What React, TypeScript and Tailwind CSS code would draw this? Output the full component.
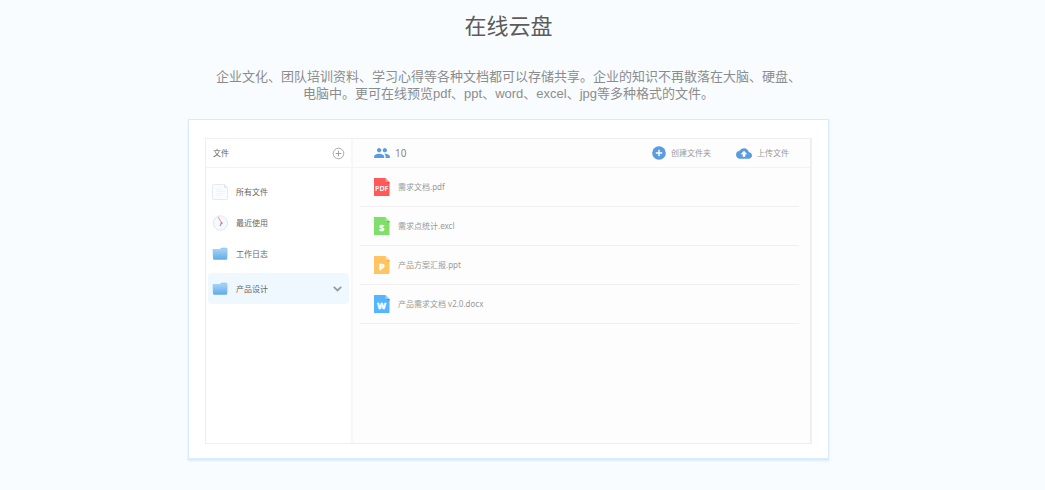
import type { ReactNode } from "react";

const folders = [
  { name: "所有文件", icon: <PageIcon /> },
  { name: "最近使用", icon: <ClockIcon /> },
  { name: "工作日志", icon: <FolderIcon /> },
];

const files = [
  { name: "需求文档.pdf", label: "PDF", fill: "#ff5a5a", fold: "#d93f42" },
  { name: "需求点统计.excl", label: "S", fill: "#7fdf6a", fold: "#52b53f" },
  { name: "产品方案汇报.ppt", label: "P", fill: "#ffc564", fold: "#f0a63a" },
  { name: "产品需求文档 v2.0.docx", label: "W", fill: "#55b6ff", fold: "#2b8fe0" },
];

function PageIcon() {
  return (
    <svg viewBox="0 0 16 16" className="h-4 w-4">
      <path d="M1.5.5h11l3 3v11a1 1 0 0 1-1 1h-13a1 1 0 0 1-1-1v-13a1 1 0 0 1 1-1z" fill="#fbfcff" stroke="#e6eaf5" />
      <path d="M12.5.5v3h3" fill="#e9ecf8" stroke="#dfe4f2" />
      <path d="M4 5.5h6M4 7.5h9M4 9.5h9M4 11.5h6" stroke="#f0f3fa" />
    </svg>
  );
}

function ClockIcon() {
  return (
    <svg viewBox="0 0 16 16" className="h-4 w-4">
      <circle cx="8.5" cy="8" r="7.2" fill="#f4f9fe" stroke="#e0e7f0" />
      <path d="M6 1.8 9.6 7.8" stroke="#f3a3a3" strokeWidth="1.2" fill="none" />
      <path d="M9.6 7.8 8 11" stroke="#a08a9a" strokeWidth="1.1" fill="none" />
      <circle cx="9.6" cy="7.9" r="1" fill="#d9777c" />
    </svg>
  );
}

function FolderIcon() {
  return (
    <svg viewBox="0 0 16 16" className="h-4 w-4">
      <defs>
        <linearGradient id="folder" x1="0" y1="0" x2="0" y2="1">
          <stop offset="0" stopColor="#a9d5f8" />
          <stop offset="1" stopColor="#5fabe6" />
        </linearGradient>
      </defs>
      <path d="M8 3 9.500 1.700H14a1 1 0 0 1 1 1V5H8z" fill="#84c0ee" />
      <path d="M.6 4a1 1 0 0 1 1-1h7l1.200-.5h4.800a1 1 0 0 1 1 1L15.300 12.300a1.500 1.500 0 0 1-1.500 1.500H2.500A1.500 1.500 0 0 1 1 12.300z" fill="url(#folder)" />
    </svg>
  );
}

function FileIcon({ label, fill, fold }: { label: string; fill: string; fold: string }) {
  const long = label.length > 1;
  return (
    <svg viewBox="0 0 16 18" className="h-[18px] w-4" aria-hidden="true">
      <path d="M0 0h11.500L15.500 4v14H0z" fill={fill} />
      <path d="M11.500 0v4h4z" fill="#fff" opacity=".35" />
      <path d="M11.500 4h4v2z" fill={fold} opacity=".7" />
      <text
        x="7.700"
        y={long ? 13 : 14}
        textAnchor="middle"
        fill="#fff"
        stroke="#fff"
        strokeWidth={long ? 0 : 0.5}
        className={long ? "text-[7px] font-semibold" : "text-[9px] font-bold"}
      >
        {label}
      </text>
    </svg>
  );
}

function FolderItem({ icon, children }: { icon: ReactNode; children: ReactNode }) {
  return (
    <li>
      <a href="#" className="flex h-[31px] items-center gap-2 px-1">
        {icon}
        {children}
      </a>
    </li>
  );
}

export default function App() {
  return (
    <section className="min-h-screen bg-[#f8fcff] pt-[9px] pr-7 pb-7 font-['Noto_Sans','Noto_Sans_CJK_SC',sans-serif]">
      <h1 className="text-center text-[22px] leading-8 text-[#5c5c5c]">在线云盘</h1>
      <p className="mx-auto mt-[27px] max-w-[590px] text-center font-['Liberation_Sans','Noto_Sans_CJK_SC',sans-serif] text-[13px] leading-[17px] text-[#8c8c8c]">
        企业文化、团队培训资料、学习心得等各种文档都可以存储共享。企业的知识不再散落在大脑、硬盘、电脑中。更可在线预览pdf、ppt、word、excel、jpg等多种格式的文件。
      </p>

      <div className="mx-auto mt-[17px] max-w-[641px] border border-b-2 border-[#d9ebff] bg-white px-4 pt-[18px] pb-[14px] shadow-[0_1px_2px_#d9e9fb]">
        <div className="flex min-h-[306px] border border-r-2 border-[#efefef] text-[8px]">
          <aside className="w-[147px] shrink-0 border-r-2 border-[#f7f7f7] text-[#666]">
            <header className="flex h-[29px] items-center justify-between border-b border-[#f3f3f3] pr-[6px] pl-[7px]">
              <h2>文件</h2>
              <button type="button" aria-label="新建">
                <svg viewBox="0 0 13 13" className="h-[13px] w-[13px]" fill="none" stroke="#a0a0a0">
                  <circle cx="6.500" cy="6.500" r="5.300" strokeWidth=".9" />
                  <path d="M6.500 3.700v5.600M3.700 6.500h5.600" />
                </svg>
              </button>
            </header>
            <ul className="px-[2px] pt-2">
              {folders.map((folder) => (
                <FolderItem key={folder.name} icon={folder.icon}>
                  {folder.name}
                </FolderItem>
              ))}
              <li className="mt-1">
                <a href="#" className="flex h-[31px] items-center gap-2 rounded-sm bg-[#f0f8ff] pr-[7px] pl-1">
                  <FolderIcon />
                  产品设计
                  <svg viewBox="0 0 9 6" className="ml-auto h-[6px] w-[9px]" fill="none" stroke="#8f9dab" strokeWidth="1.800">
                    <path d="M.8.8 4.500 4.500 8.200.8" />
                  </svg>
                </a>
              </li>
            </ul>
          </aside>

          <main className="min-w-0 flex-1 bg-[#fdfdfd] text-[#999]">
            <header className="flex h-[29px] items-center border-b border-[#f3f3f3] pr-[21px] pl-[21px]">
              <svg viewBox="1 5 22 14" className="h-[10px] w-4" fill="#5a9ce0">
                <path d="M16 11c1.660 0 2.990-1.340 2.990-3S17.660 5 16 5s-3 1.340-3 3 1.340 3 3 3zm-8 0c1.660 0 2.990-1.340 2.990-3S9.660 5 8 5 5 6.340 5 8s1.340 3 3 3zm0 2c-2.330 0-7 1.170-7 3.500V19h14v-2.500c0-2.330-4.670-3.500-7-3.500zm8 0c-.290 0-.620.020-.970.050 1.160.840 1.970 1.970 1.970 3.450V19h6v-2.500c0-2.330-4.670-3.500-7-3.500z" />
              </svg>
              <span className="ml-[5px] text-[10px] text-[#888]">10</span>
              <div className="ml-auto flex items-center gap-[25px]">
                <button type="button" className="flex items-center gap-[5px]">
                  <svg viewBox="0 0 14 14" className="h-[14px] w-[14px]">
                    <circle cx="7" cy="7" r="6.800" fill="#5a9ce0" />
                    <path d="M7 3.800v6.400M3.800 7h6.400" stroke="#fff" strokeWidth="1.400" />
                  </svg>
                  创建文件夹
                </button>
                <button type="button" className="flex items-center gap-[5px]">
                  <svg viewBox="0 4 24 16" className="h-[11px] w-4" fill="#5a9ce0">
                    <path d="M19.350 10.040C18.670 6.590 15.640 4 12 4 9.110 4 6.600 5.640 5.350 8.040 2.340 8.360 0 10.910 0 14c0 3.310 2.690 6 6 6h13c2.760 0 5-2.240 5-5 0-2.640-2.050-4.780-4.650-4.960z" />
                    <path d="M14 13v4h-4v-4H7l5-5 5 5z" fill="#fff" />
                  </svg>
                  上传文件
                </button>
              </div>
            </header>
            <ul className="mr-[11px] ml-[7px]">
              {files.map((file) => (
                <li key={file.name} className="border-b border-[#f0f0f0]">
                  <a href="#" className="flex h-[38px] items-center gap-2 pl-[14px]">
                    <FileIcon label={file.label} fill={file.fill} fold={file.fold} />
                    {file.name}
                  </a>
                </li>
              ))}
            </ul>
          </main>
        </div>
      </div>
    </section>
  );
}
